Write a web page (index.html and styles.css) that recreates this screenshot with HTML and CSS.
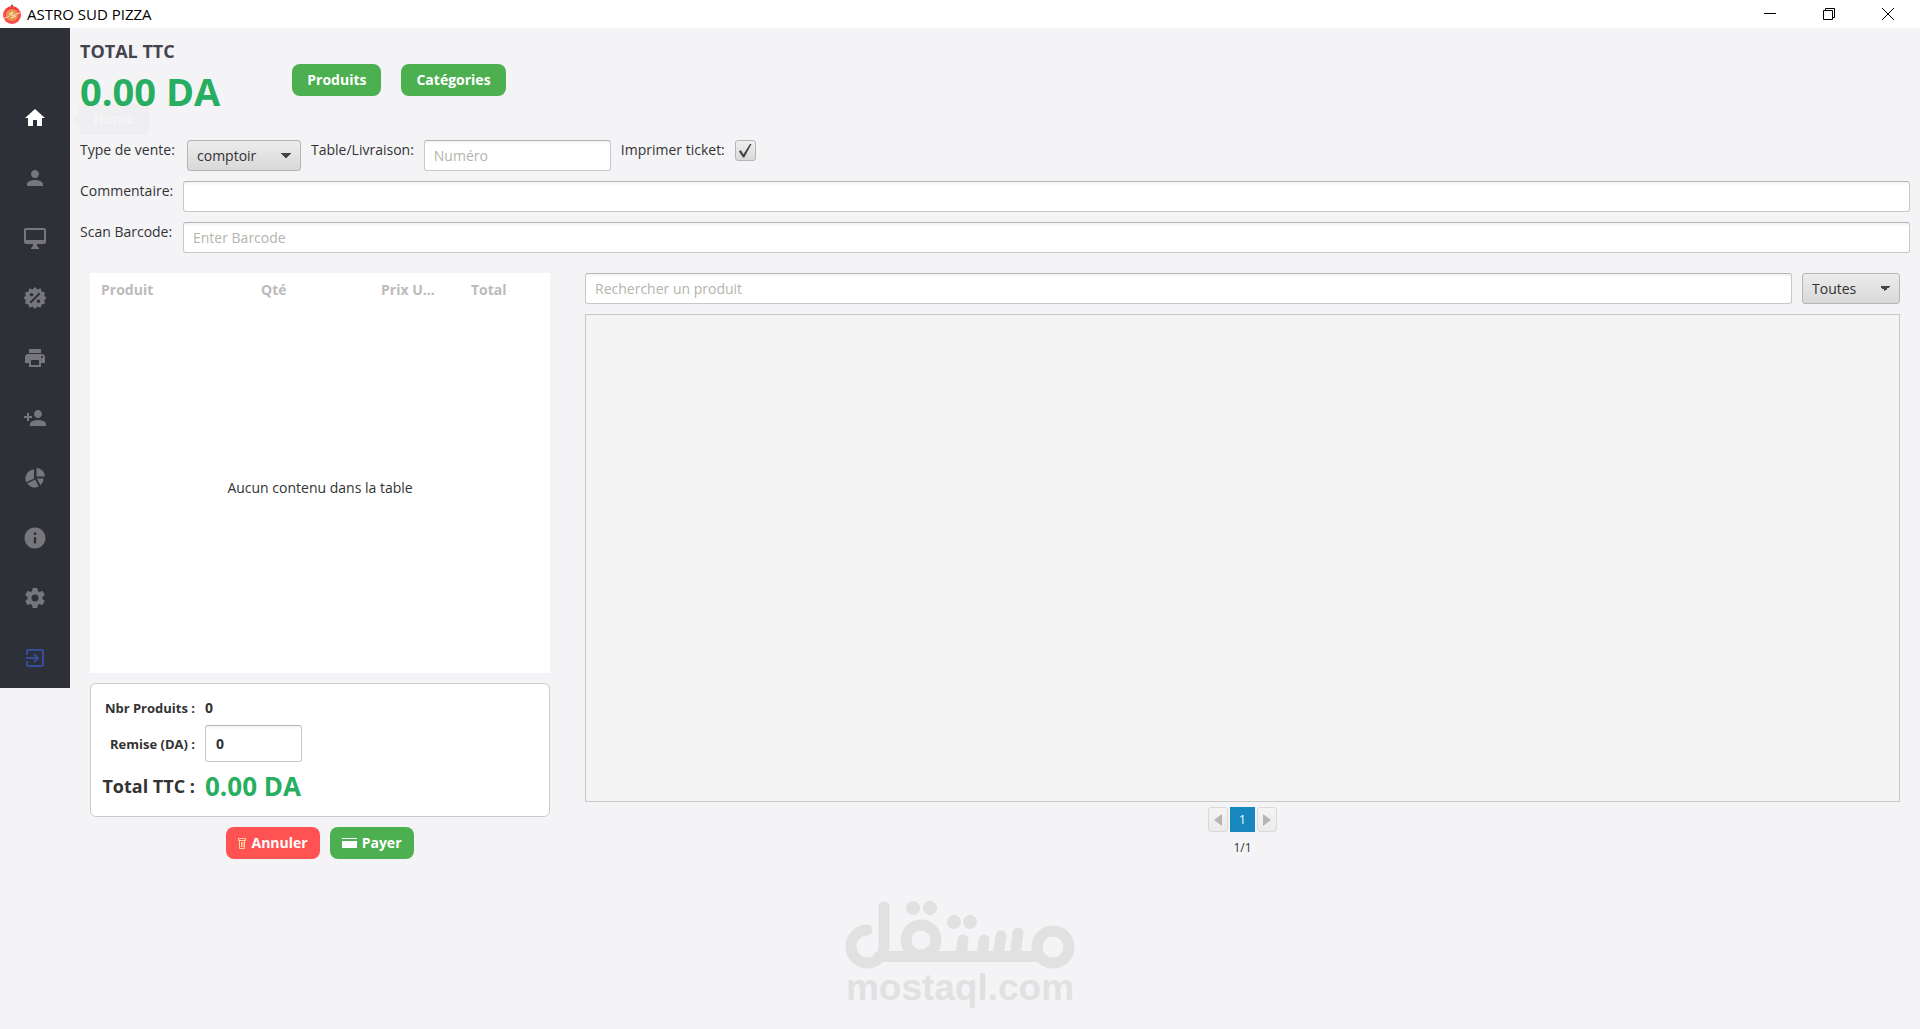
FILE: index.html
```html
<!DOCTYPE html>
<html lang="fr">
<head>
    <meta charset="UTF-8">
    <meta name="viewport" content="width=device-width, initial-scale=1.0">
    <title>ASTRO SUD PIZZA</title>
    <link rel="stylesheet" href="styles.css">
</head>
<body>
<header class="title-bar">
    <svg class="app-logo" viewBox="0 0 20 20">
        <path d="M10 0 L11.500 3 H8.500z" fill="#5a2a2a"/>
        <circle cx="10" cy="11" r="9" fill="#fb4b4b"/>
        <path d="M4.500 6l2-3 3 1.500L10 1l1 3.500 3-1 1.500 2.500z" fill="#f03a3a"/>
        <circle cx="10" cy="11" r="6" fill="#e8964c"/>
        <path d="M2 14c5 0 6-4 9-5-1 2-2 2-1 3 3 0 4-3 8-3M7 10l4-2M9 14l5-2" fill="none" stroke="#ffe3c0" stroke-width="1"/>
    </svg>
    <span class="app-title">ASTRO SUD PIZZA</span>
    <div class="window-buttons">
        <button class="window-button" aria-label="Réduire">
            <svg viewBox="0 0 12 12"><path d="M0 5.500h12"/></svg>
        </button>
        <button class="window-button" aria-label="Restaurer">
            <svg viewBox="0 0 12 12"><path d="M.5 2.500h9v9h-9zM2.500 2.500v-2h9v9h-2"/></svg>
        </button>
        <button class="window-button" aria-label="Fermer">
            <svg viewBox="0 0 12 12"><path d="M0 0l12 12M12 0L0 12"/></svg>
        </button>
    </div>
</header>

<div class="app">
    <nav class="sidebar">
        <a class="nav-item active" href="#home" aria-label="Home">
            <svg viewBox="0 0 24 24"><path d="M10 20v-6h4v6h5v-8h3L12 3 2 12h3v8z"/></svg>
            <span class="tooltip">Home</span>
        </a>
        <a class="nav-item" href="#clients" aria-label="Clients">
            <svg viewBox="0 0 24 24"><path d="M12 12c2.210 0 4-1.790 4-4s-1.790-4-4-4-4 1.790-4 4 1.790 4 4 4zm0 2c-2.670 0-8 1.340-8 4v2h16v-2c0-2.660-5.330-4-8-4z"/></svg>
        </a>
        <a class="nav-item" href="#caisse" aria-label="Caisse">
            <svg viewBox="0 0 24 24"><path d="M21 2H3c-1.100 0-2 .9-2 2v12c0 1.100.9 2 2 2h7v2l-2 2v1h8v-1l-2-2v-2h7c1.100 0 2-.9 2-2V4c0-1.100-.9-2-2-2zm0 12H3V4h18v10z"/></svg>
        </a>
        <a class="nav-item" href="#remises" aria-label="Remises">
            <svg viewBox="0 0 24 24"><path fill-rule="evenodd" d="M12 1l2.400 2.500 3.200-1.200 1 3.300 3.400.8-.8 3.300L23.500 12l-2.300 2.300.8 3.300-3.400.8-1 3.300-3.200-1.200L12 23l-2.400-2.500-3.200 1.200-1-3.300-3.400-.8.8-3.300L.5 12l2.300-2.300L2 6.400l3.400-.8 1-3.300 3.200 1.200zM8.500 7a1.800 1.800 0 100 3.600 1.800 1.800 0 000-3.600zm7 6.400a1.800 1.800 0 100 3.600 1.800 1.800 0 000-3.600zM16 6.600L6.600 16 8 17.400 17.400 8z"/></svg>
        </a>
        <a class="nav-item" href="#imprimante" aria-label="Imprimante">
            <svg viewBox="0 0 24 24"><path d="M19 8H5c-1.660 0-3 1.340-3 3v6h4v4h12v-4h4v-6c0-1.660-1.340-3-3-3zm-3 11H8v-5h8v5zm3-7c-.55 0-1-.45-1-1s.45-1 1-1 1 .45 1 1-.45 1-1 1zm-1-9H6v4h12V3z"/></svg>
        </a>
        <a class="nav-item" href="#utilisateurs" aria-label="Utilisateurs">
            <svg viewBox="0 0 24 24"><path d="M15 12c2.210 0 4-1.790 4-4s-1.790-4-4-4-4 1.790-4 4 1.790 4 4 4zm-9-2V7H4v3H1v2h3v3h2v-3h3v-2H6zm9 4c-2.670 0-8 1.340-8 4v2h16v-2c0-2.660-5.330-4-8-4z"/></svg>
        </a>
        <a class="nav-item" href="#statistiques" aria-label="Statistiques">
            <svg viewBox="0 0 24 24"><path d="M13.500 2v8.500H22A8.600 8.600 0 0013.500 2zM11 3.500A9 9 0 003.200 16.200L11 12.400zM12.200 13.600L4.200 17.600A9 9 0 0015.600 20.600zM14 12.500l3.300 6.800A9 9 0 0020.500 12.500z"/></svg>
        </a>
        <a class="nav-item" href="#infos" aria-label="Informations">
            <svg viewBox="0 0 24 24"><path d="M12 1.500C6.200 1.500 1.500 6.200 1.500 12S6.200 22.500 12 22.500 22.500 17.800 22.500 12 17.800 1.500 12 1.500zm1.200 16h-2.400V11h2.400v6.500zm0-8.500h-2.400V6.600h2.400V9z"/></svg>
        </a>
        <a class="nav-item" href="#parametres" aria-label="Paramètres">
            <svg viewBox="0 0 24 24"><path d="M12 15.500A3.500 3.500 0 018.500 12 3.500 3.500 0 0112 8.500a3.500 3.500 0 013.500 3.500 3.500 3.500 0 01-3.500 3.500m7.430-2.530c.04-.32.07-.64.07-.97s-.03-.66-.07-1l2.110-1.630c.19-.15.24-.42.12-.64l-2-3.460c-.12-.22-.39-.31-.61-.22l-2.490 1c-.52-.39-1.060-.73-1.690-.98l-.37-2.650A.506.506 0 0014 2h-4c-.25 0-.46.18-.5.42l-.37 2.650c-.63.25-1.170.59-1.690.98l-2.490-1c-.22-.09-.49 0-.61.22l-2 3.460c-.13.22-.07.49.12.64L4.570 11c-.04.34-.07.67-.07 1s.03.65.07.97l-2.110 1.660c-.19.15-.25.42-.12.64l2 3.460c.12.22.39.3.61.22l2.490-1.010c.52.4 1.060.74 1.690.99l.37 2.650c.04.24.25.42.5.42h4c.25 0 .46-.18.5-.42l.37-2.650c.63-.26 1.170-.59 1.690-.99l2.490 1.010c.22.08.49 0 .61-.22l2-3.460c.12-.22.07-.49-.12-.64z"/></svg>
        </a>
        <a class="nav-item logout" href="#quitter" aria-label="Quitter">
            <svg viewBox="0 0 24 24"><path d="M19 3H5c-1.110 0-2 .89-2 2v4h2V5h14v14H5v-4H3v4a2 2 0 002 2h14a2 2 0 002-2V5a2 2 0 00-2-2m-8.920 12.580L11.500 17l5-5-5-5-1.420 1.410L12.670 11H3v2h9.670z"/></svg>
        </a>
    </nav>

    <main class="content">
        <section class="top">
            <div class="total">
                <h1 class="total-label">TOTAL TTC</h1>
                <div class="total-value">0.00 DA</div>
            </div>
            <div class="top-buttons">
                <button class="btn btn-green">Produits</button>
                <button class="btn btn-green">Catégories</button>
            </div>
        </section>

        <form class="sale-form">
            <div class="form-row">
                <label class="type-label" for="saleType">Type de vente:</label>
                <select class="field select sale-type" id="saleType">
                    <option>comptoir</option>
                </select>
                <label for="tableNumber">Table/Livraison:</label>
                <input class="field table-number" type="text" id="tableNumber" placeholder="Numéro">
                <label for="printTicket">Imprimer ticket:</label>
                <input class="checkbox" type="checkbox" id="printTicket" checked>
            </div>
            <div class="form-row">
                <label class="wide-label" for="comment">Commentaire:</label>
                <input class="field grow" type="text" id="comment">
            </div>
            <div class="form-row">
                <label class="wide-label" for="barcode">Scan Barcode:</label>
                <input class="field grow" type="text" id="barcode" placeholder="Enter Barcode">
            </div>
        </form>

        <div class="columns">
            <section class="cart">
                <table class="cart-table">
                    <colgroup>
                        <col class="col-product">
                        <col class="col-qty">
                        <col class="col-price">
                        <col class="col-total">
                    </colgroup>
                    <thead>
                    <tr>
                        <th>Produit</th>
                        <th>Qté</th>
                        <th>Prix U...</th>
                        <th>Total</th>
                    </tr>
                    </thead>
                    <tbody>
                    <tr>
                        <td class="empty" colspan="4">Aucun contenu dans la table</td>
                    </tr>
                    </tbody>
                </table>

                <div class="summary">
                    <span class="summary-label">Nbr Produits :</span>
                    <span class="summary-count">0</span>
                    <label class="summary-label" for="discount">Remise (DA) :</label>
                    <input class="field discount" type="text" id="discount" value="0">
                    <span class="summary-label big">Total TTC :</span>
                    <span class="summary-total">0.00 DA</span>
                </div>

                <div class="actions">
                    <button class="btn btn-red">
                        <svg class="icon-trash" viewBox="0 0 8 12"><path d="M.5 1.500h7v2h-7zM1.500 3.500v8h5v-8M3.500 5v5M5 5v5"/></svg>
                        Annuler
                    </button>
                    <button class="btn btn-green">
                        <svg class="icon-card" viewBox="0 0 15 12"><path d="M0 1h15v1H0zM0 4h15v7H0z"/></svg>
                        Payer
                    </button>
                </div>
            </section>

            <section class="catalog">
                <div class="search-row">
                    <input class="field grow" type="text" placeholder="Rechercher un produit" aria-label="Rechercher un produit">
                    <select class="field select category" aria-label="Catégorie">
                        <option>Toutes</option>
                    </select>
                </div>
                <div class="products"></div>
                <div class="pagination">
                    <button class="page-arrow" aria-label="Précédent"><svg viewBox="0 0 8 12"><path d="M8 0v12L0 6z"/></svg></button>
                    <button class="page-current">1</button>
                    <button class="page-arrow" aria-label="Suivant"><svg viewBox="0 0 8 12"><path d="M0 0v12l8-6z"/></svg></button>
                </div>
                <div class="page-info">1/1</div>
            </section>
        </div>
    </main>
</div>

<div class="watermark">
    <svg viewBox="0 0 230 68">
        <g fill="none" stroke="#e1e1e1" stroke-width="11" stroke-linecap="round">
            <path d="M22 29A16.500 16.500 0 1 0 39 46V6"/>
            <path d="M34 55.500h160"/>
            <circle cx="76" cy="39" r="15"/>
            <circle cx="208" cy="46" r="16"/>
            <path d="M118 39l-2 16M139 39l-2 16M156 35l-3 20M173 32l-3 23"/>
        </g>
        <g fill="#e1e1e1">
            <circle cx="68" cy="7" r="7"/>
            <circle cx="85" cy="7" r="7"/>
            <circle cx="109" cy="21" r="7"/>
            <circle cx="125" cy="21" r="7"/>
        </g>
    </svg>
    <span>mostaql.com</span>
</div>
</body>
</html>
```

FILE: styles.css
```css
* {
    margin: 0;
    padding: 0;
    box-sizing: border-box;
}

body {
    min-height: 100vh;
    font-family: 'Segoe UI', 'Open Sans', 'Noto Sans', sans-serif;
    font-size: 14px;
    line-height: 20px;
    color: #333;
    background: #f4f4f7;
}

button,
input,
select {
    font: inherit;
    color: inherit;
}

/* Barre de titre */
.title-bar {
    display: flex;
    align-items: center;
    gap: 5px;
    height: 28px;
    padding-left: 2px;
    background: white;
    color: black;
}

.app-logo {
    width: 20px;
    height: 20px;
}

.app-title {
    font-size: 15px;
}

.window-buttons {
    display: flex;
    margin-left: auto;
    gap: 12px;
    padding-right: 9px;
}

.window-button {
    display: flex;
    align-items: center;
    justify-content: center;
    width: 47px;
    height: 26px;
    border: none;
    background: none;
}

.window-button svg {
    width: 12px;
    height: 12px;
    fill: none;
    stroke: black;
}

.app {
    display: flex;
    align-items: flex-start;
}

/* Menu latéral */
.sidebar {
    flex: none;
    width: 70px;
    padding-top: 60px;
    background: #2e3038;
}

.nav-item {
    position: relative;
    display: flex;
    align-items: center;
    justify-content: center;
    height: 60px;
}

.nav-item svg {
    width: 24px;
    height: 24px;
    fill: #77777b;
}

.nav-item.active svg {
    fill: white;
}

.nav-item.logout svg {
    fill: #344d9c;
}

.tooltip {
    position: absolute;
    top: 16px;
    left: 79px;
    width: 70px;
    height: 31px;
    line-height: 30px;
    border-radius: 4px;
    background: rgba(0, 0, 0, 0.02);
    color: #f5f5f6;
    font-weight: bold;
    text-align: center;
}

.tooltip::before {
    content: '';
    position: absolute;
    top: 9px;
    left: -12px;
    border: 6px solid transparent;
    border-right-color: rgba(0, 0, 0, 0.02);
}

.content {
    flex: 1;
    min-width: 0;
    padding: 10px;
}

/* Total et boutons */
.top {
    display: flex;
    gap: 72px;
    height: 102px;
}

.total-label {
    font-size: 18px;
    line-height: 26px;
    color: #44444f;
}

.total-value {
    font-size: 38px;
    line-height: 54px;
    font-weight: bold;
    color: #27ae60;
}

.top-buttons {
    display: flex;
    align-items: flex-start;
    gap: 20px;
    padding-top: 26px;
}

.btn {
    display: flex;
    align-items: center;
    gap: 5px;
    height: 32px;
    padding: 0 15px;
    border: none;
    border-radius: 8px;
    color: white;
    font-weight: bold;
    cursor: pointer;
}

.btn-green {
    background: #4caf50;
}

.btn-red {
    background: #ff5252;
}

/* Formulaire de vente */
.sale-form {
    display: flex;
    flex-direction: column;
    gap: 10px;
}

.form-row {
    display: flex;
    align-items: flex-start;
    gap: 10px;
}

.type-label {
    width: 97px;
    white-space: nowrap;
}

.wide-label {
    width: 93px;
    white-space: nowrap;
}

.field {
    height: 31px;
    padding: 0 9px;
    border: 1px solid #c8c8c8;
    border-top-color: #b4b4b4;
    border-radius: 3px;
    background: linear-gradient(#f3f3f3, white 4px);
    outline: none;
}

.field::placeholder {
    color: #b3b5ac;
    opacity: 1;
}

.grow {
    flex: 1;
    min-width: 0;
}

.select {
    appearance: none;
    border-color: #b5b5b5;
    background:
        linear-gradient(to bottom left, #44444c 50%, transparent 50%) right 14px center / 5px 5px no-repeat,
        linear-gradient(to bottom right, #44444c 50%, transparent 50%) right 9px center / 5px 5px no-repeat,
        linear-gradient(#ececec, #d9d9d9);
}

.sale-type {
    width: 114px;
}

.table-number {
    width: 187px;
}

.checkbox {
    appearance: none;
    display: grid;
    place-items: center;
    width: 21px;
    height: 21px;
    border: 1px solid #b5b5b5;
    border-radius: 3px;
    background: linear-gradient(#f0f0f0, #d9d9d9);
}

.checkbox:checked::before {
    content: '';
    width: 13px;
    height: 14px;
    background: #44444c;
    clip-path: polygon(0 55%, 16% 48%, 36% 76%, 88% 0, 100% 0, 42% 100%, 32% 100%);
}

/* Panier */
.columns {
    display: flex;
    gap: 35px;
    padding: 20px 10px 0;
}

.cart {
    flex: none;
    width: 460px;
}

.cart-table {
    width: 100%;
    height: 400px;
    table-layout: fixed;
    border-collapse: collapse;
    background: white;
}

.col-product {
    width: 160px;
}

.col-qty {
    width: 120px;
}

.col-price {
    width: 90px;
}

.cart-table th {
    height: 33px;
    padding-left: 11px;
    color: #bbb;
    text-align: left;
}

.cart-table .empty {
    padding-bottom: 4px;
    text-align: center;
}

.summary {
    display: grid;
    grid-template-columns: 93px 1fr;
    grid-template-rows: 28px 43px 42px;
    align-items: center;
    column-gap: 10px;
    margin-top: 10px;
    padding: 10px 11px 9px;
    border: 1px solid #ccc;
    border-radius: 6px;
    background: white;
    font-weight: bold;
}

.summary-label {
    font-size: 13px;
    text-align: right;
    white-space: nowrap;
}

.summary-label.big {
    font-size: 18px;
}

.discount {
    width: 97px;
    height: 37px;
    padding: 0 10px;
}

.summary-total {
    font-size: 26px;
    color: #27ae60;
}

.actions {
    display: flex;
    justify-content: center;
    gap: 10px;
    margin-top: 10px;
}

.actions .btn {
    padding: 0 12px;
}

.icon-trash {
    width: 8px;
    height: 12px;
    fill: none;
    stroke: #ffd9a0;
}

.icon-card {
    width: 15px;
    height: 12px;
    fill: white;
}

/* Catalogue */
.catalog {
    flex: 1;
    min-width: 0;
}

.search-row {
    display: flex;
    gap: 10px;
}

.category {
    width: 98px;
}

.products {
    height: 488px;
    margin-top: 10px;
    border: 1px solid #c8c8c8;
    background: #f4f4f4;
}

.pagination {
    display: flex;
    justify-content: center;
    gap: 2px;
    margin-top: 5px;
}

.page-arrow {
    display: flex;
    align-items: center;
    justify-content: center;
    width: 20px;
    height: 25px;
    border: 1px solid #d9d9d9;
    border-radius: 3px;
    background: linear-gradient(#f4f4f4, #ebebeb);
}

.page-arrow svg {
    width: 8px;
    height: 12px;
    fill: #b5b5b5;
}

.page-current {
    width: 25px;
    height: 25px;
    border: none;
    background: #1787bd;
    color: white;
    font-size: 12px;
}

.page-info {
    margin-top: 6px;
    font-size: 12px;
    text-align: center;
}

/* Filigrane */
.watermark {
    position: absolute;
    left: 50%;
    bottom: 22px;
    width: 230px;
    transform: translateX(-50%);
    color: #e1e1e1;
    font-family: 'Liberation Sans', Arial, sans-serif;
    font-size: 37px;
    line-height: 38px;
    font-weight: bold;
    text-align: center;
}

.watermark svg {
    display: block;
    width: 230px;
    height: 68px;
}
```
